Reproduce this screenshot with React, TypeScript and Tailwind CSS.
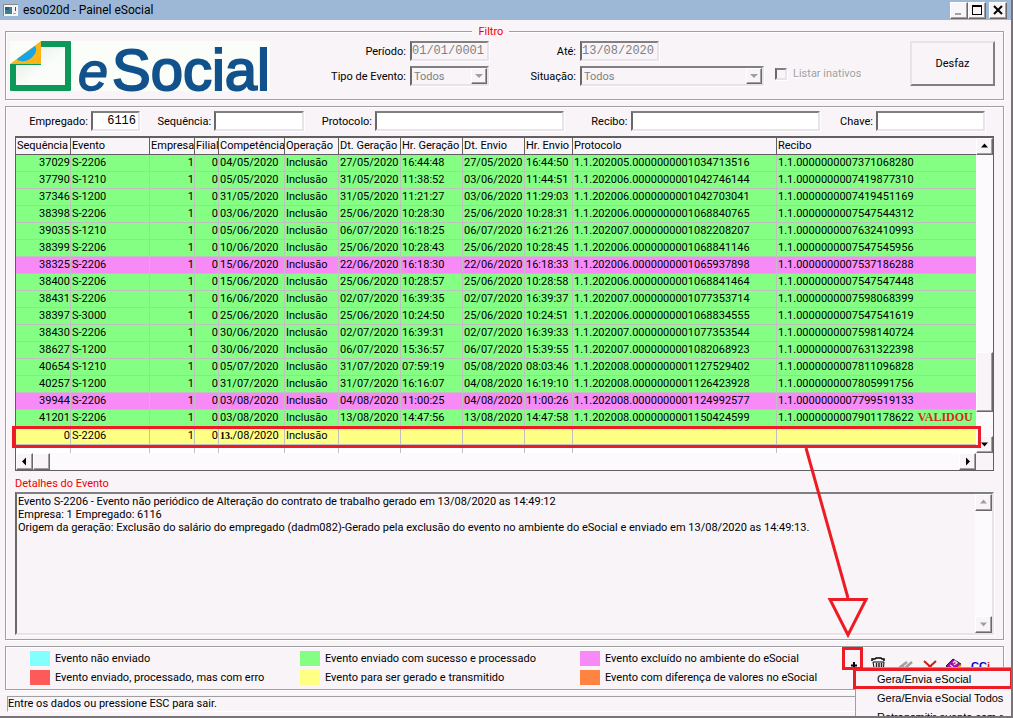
import { useState } from "react";
import type { ReactNode } from "react";

const etched = "border border-[#a0a0a0] shadow-[1px_1px_0_#fff,inset_1px_1px_0_#fff]";
const sunken =
  "border-2 border-t-[#808080] border-l-[#696969] border-r-[#e8e3e8] border-b-[#e8e3e8] shadow-[1px_1px_0_#fff]";
const raised =
  "border border-t-white border-l-white border-r-[#696969] border-b-[#696969] bg-[#f8f4f8] shadow-[inset_-1px_-1px_0_#a0a0a0]";
const track = "bg-[#fcfafc]";

type Tone = "sent" | "removed" | "pending";

interface EventRow {
  tone: Tone;
  cells: string[];
}

const toneClass: Record<Tone, string> = {
  sent: "bg-[#84ff84]",
  removed: "bg-[#f88af8]",
  pending: "bg-[#ffff84]",
};

const columns: { title: string; width: string; right?: boolean }[] = [
  { title: "Sequência", width: "w-[55px]", right: true },
  { title: "Evento", width: "w-[79px]" },
  { title: "Empresa", width: "w-[45px]", right: true },
  { title: "Filial", width: "w-[24px]", right: true },
  { title: "Competência", width: "w-[66px]" },
  { title: "Operação", width: "w-[54px]" },
  { title: "Dt. Geração", width: "w-[62px]" },
  { title: "Hr. Geração", width: "w-[62px]" },
  { title: "Dt. Envio", width: "w-[62px]" },
  { title: "Hr. Envio", width: "w-[48px]" },
  { title: "Protocolo", width: "w-[204px]" },
  { title: "Recibo", width: "" },
];

const row = (
  tone: Tone,
  seq: string,
  event: string,
  period: string,
  created: string,
  createdAt: string,
  sent: string,
  sentAt: string,
  protocol: string,
  receipt: string,
): EventRow => ({
  tone,
  cells: [seq, event, "1", "0", period, "Inclusão", created, createdAt, sent, sentAt, protocol, receipt],
});

const rows: EventRow[] = [
  row("sent", "37029", "S-2206", "04/05/2020", "27/05/2020", "16:44:48", "27/05/2020", "16:44:50", "1.1.202005.0000000001034713516", "1.1.0000000007371068280"),
  row("sent", "37790", "S-1210", "05/05/2020", "31/05/2020", "11:38:52", "03/06/2020", "11:44:51", "1.1.202006.0000000001042746144", "1.1.0000000007419877310"),
  row("sent", "37346", "S-1200", "31/05/2020", "31/05/2020", "11:21:27", "03/06/2020", "11:29:03", "1.1.202006.0000000001042703041", "1.1.0000000007419451169"),
  row("sent", "38398", "S-2206", "03/06/2020", "25/06/2020", "10:28:30", "25/06/2020", "10:28:31", "1.1.202006.0000000001068840765", "1.1.0000000007547544312"),
  row("sent", "39035", "S-1210", "05/06/2020", "06/07/2020", "16:18:25", "06/07/2020", "16:21:26", "1.1.202007.0000000001082208207", "1.1.0000000007632410993"),
  row("sent", "38399", "S-2206", "10/06/2020", "25/06/2020", "10:28:43", "25/06/2020", "10:28:45", "1.1.202006.0000000001068841146", "1.1.0000000007547545956"),
  row("removed", "38325", "S-2206", "15/06/2020", "22/06/2020", "16:18:30", "22/06/2020", "16:18:33", "1.1.202006.0000000001065937898", "1.1.0000000007537186288"),
  row("sent", "38400", "S-2206", "15/06/2020", "25/06/2020", "10:28:57", "25/06/2020", "10:28:58", "1.1.202006.0000000001068841464", "1.1.0000000007547547448"),
  row("sent", "38431", "S-2206", "16/06/2020", "02/07/2020", "16:39:35", "02/07/2020", "16:39:37", "1.1.202007.0000000001077353714", "1.1.0000000007598068399"),
  row("sent", "38397", "S-3000", "25/06/2020", "25/06/2020", "10:24:50", "25/06/2020", "10:24:51", "1.1.202006.0000000001068834555", "1.1.0000000007547541619"),
  row("sent", "38430", "S-2206", "30/06/2020", "02/07/2020", "16:39:31", "02/07/2020", "16:39:33", "1.1.202007.0000000001077353544", "1.1.0000000007598140724"),
  row("sent", "38627", "S-1200", "30/06/2020", "06/07/2020", "15:36:57", "06/07/2020", "15:39:55", "1.1.202007.0000000001082068923", "1.1.0000000007631322398"),
  row("sent", "40654", "S-1210", "05/07/2020", "31/07/2020", "07:59:19", "05/08/2020", "08:03:46", "1.1.202008.0000000001127529402", "1.1.0000000007811096828"),
  row("sent", "40257", "S-1200", "31/07/2020", "31/07/2020", "16:16:07", "04/08/2020", "16:19:10", "1.1.202008.0000000001126423928", "1.1.0000000007805991756"),
  row("removed", "39944", "S-2206", "03/08/2020", "04/08/2020", "11:00:25", "04/08/2020", "11:00:26", "1.1.202008.0000000001124992577", "1.1.0000000007799519133"),
  row("sent", "41201", "S-2206", "03/08/2020", "13/08/2020", "14:47:56", "13/08/2020", "14:47:58", "1.1.202008.0000000001150424599", "1.1.0000000007901178622"),
  row("pending", "0", "S-2206", "/08/2020", "", "", "", "", "", ""),
];

const legend = [
  { label: "Evento não enviado", color: "bg-[#84ffff]" },
  { label: "Evento enviado com sucesso e processado", color: "bg-[#84ff84]" },
  { label: "Evento excluído no ambiente do eSocial", color: "bg-[#f88af8]" },
  { label: "Evento enviado, processado, mas com erro", color: "bg-[#ff5a5a]" },
  { label: "Evento para ser gerado e transmitido", color: "bg-[#ffff84]" },
  { label: "Evento com diferença de valores no eSocial", color: "bg-[#ff8442]" },
];

const details = [
  "Evento S-2206 - Evento não periódico de Alteração do contrato de trabalho gerado em 13/08/2020 as 14:49:12",
  "Empresa: 1 Empregado: 6116",
  "Origem da geração: Exclusão do salário do empregado (dadm082)-Gerado pela exclusão do evento no ambiente do eSocial e enviado em 13/08/2020 as 14:49:13.",
].join("\n");

const arrowPoints = {
  up: "4,8 11,8 7.5,4",
  down: "4,5 11,5 7.5,9",
  left: "9,3 9,11 5,7",
  right: "6,3 6,11 10,7",
};

function ArrowButton({ dir, label, muted = false }: { dir: keyof typeof arrowPoints; label: string; muted?: boolean }) {
  return (
    <button
      type="button"
      aria-label={label}
      className={`flex h-[17px] w-[17px] shrink-0 items-center justify-center ${raised} ${muted ? "text-[#a0a0a0]" : "text-black"}`}
    >
      <svg width="15" height="15" viewBox="0 0 15 14" aria-hidden="true">
        <polygon points={arrowPoints[dir]} fill="currentColor" />
      </svg>
    </button>
  );
}

function TitleButton({ label, children }: { label: string; children: ReactNode }) {
  return (
    <button type="button" aria-label={label} className={`flex h-[17px] w-[18px] items-center justify-center ${raised}`}>
      <svg width="14" height="13" viewBox="0 0 14 13" fill="none" aria-hidden="true" shapeRendering="crispEdges">
        {children}
      </svg>
    </button>
  );
}

function Logo() {
  return (
    <svg
      width="262"
      height="50"
      viewBox="0 0 262 50"
      role="img"
      aria-label="eSocial"
      className="shrink-0 overflow-visible"
    >
      <defs>
        <linearGradient id="sheet" x1="0" y1="0" x2="1" y2="1">
          <stop offset="0" stopColor="#dfeadf" />
          <stop offset="0.6" stopColor="#fbfdfb" />
        </linearGradient>
      </defs>
      <rect x="1" width="260" height="50" fill="#fafdf8" />
      <path d="M32 0H61Q62 0 62 1V49Q62 50 61 50H2Q1 50 1 49V23H32Z" fill="#0b9858" />
      <path d="M32 6H56V44H7V24H32Z" fill="url(#sheet)" />
      <path d="M32 23V0L1 23Z" fill="#f9b515" />
      <path d="M8 18L26 5Q29 9 25 14Q20 21 12 20Q9 20 8 18Z" fill="#16a5e8" />
      <g fill="#12528c" stroke="#12528c" fontFamily="'Liberation Sans', Arial, sans-serif">
        <text x="69" y="49" fontSize="54" fontStyle="italic" strokeWidth="1.5">
          e
        </text>
        <text x="103" y="49" fontSize="58" strokeWidth="2">
          Social
        </text>
      </g>
    </svg>
  );
}

function SelectBox({ id, className }: { id: string; className: string }) {
  return (
    <div className={`flex h-5 bg-[#f8f4f8] ${sunken} ${className}`}>
      <select
        id={id}
        disabled
        className="min-w-0 flex-1 appearance-none bg-transparent pl-0.5 pt-px text-[11px] leading-4 text-[#808080] opacity-100"
      >
        <option>Todos</option>
      </select>
      <span className={`flex w-4 items-center justify-center text-[#a0a0a0] ${raised}`}>
        <svg width="8" height="4" viewBox="0 0 8 4" aria-hidden="true">
          <polygon points="0,0 8,0 4,4" fill="currentColor" />
        </svg>
      </span>
    </div>
  );
}

function FilterPanel() {
  const dateClass = `h-5 bg-[#f8f4f8] font-['Liberation_Mono',monospace] text-[12px] text-[#808080] ${sunken}`;
  return (
    <fieldset className={`mt-[5px] min-w-0 pb-2 pl-[3px] pr-2 pt-[3px] ${etched}`}>
      <legend className="ml-[47%] h-[13px] bg-[#f8f4f8] px-1.5 text-[11px] leading-[13px] text-[#f00000]">Filtro</legend>
      <div className="flex items-start">
        <Logo />
        <div className="ml-[55px] grid grid-cols-[80px_80px] items-center gap-x-1 gap-y-[5px]">
          <label htmlFor="periodo" className="text-right">Período:</label>
          <input id="periodo" disabled defaultValue="01/01/0001" className={`w-[79px] ${dateClass}`} />
          <label htmlFor="tipo" className="text-right">Tipo de Evento:</label>
          <SelectBox id="tipo" className="w-[79px]" />
        </div>
        <div className="ml-[26px] grid grid-cols-[60px_184px] items-center gap-x-1 gap-y-[5px]">
          <label htmlFor="ate" className="text-right">Até:</label>
          <input id="ate" disabled defaultValue="13/08/2020" className={`w-[79px] ${dateClass}`} />
          <label htmlFor="situacao" className="text-right">Situação:</label>
          <SelectBox id="situacao" className="w-full" />
        </div>
        <label className="ml-[11px] mt-[26px] flex items-center gap-1.5 text-[#a0a0a0] [text-shadow:1px_1px_0_#fff]">
          <input type="checkbox" disabled className={`size-3 appearance-none bg-[#f8f4f8] ${sunken}`} />
          Listar inativos
        </label>
        <button
          type="button"
          className="ml-auto h-[45px] w-[85px] border-2 border-b-[#808080] border-l-[#e8e3e8] border-r-[#808080] border-t-[#e8e3e8]"
        >
          Desfaz
        </button>
      </div>
    </fieldset>
  );
}

interface SearchFieldProps {
  id: string;
  label: string;
  className: string;
  inputClass: string;
  value?: string;
}

function SearchField({ id, label, className, inputClass, value = "" }: SearchFieldProps) {
  return (
    <div className={`flex items-center gap-[3px] ${className}`}>
      <label htmlFor={id} className="flex-1 whitespace-nowrap text-right">{label}</label>
      <input
        id={id}
        defaultValue={value}
        className={`h-5 bg-white pr-0.5 text-right font-['Liberation_Mono',monospace] text-[12px] ${sunken} ${inputClass}`}
      />
    </div>
  );
}

function CellContent({ rowIndex, column, value }: { rowIndex: number; column: number; value: string }) {
  if (rowIndex === 16 && column === 4) {
    return (
      <>
        <b className="font-['Liberation_Serif',serif] text-[10px] leading-none">13.</b>
        {value}
      </>
    );
  }
  if (rowIndex === 15 && column === 11) {
    return (
      <>
        {value}
        <b className="ml-1 font-['Liberation_Serif',serif] text-[12px] leading-none text-[#d8281c]">VALIDOU</b>
      </>
    );
  }
  return <>{value}</>;
}

function EventTable() {
  return (
    <div className="mt-[5px] border-b border-l border-r border-t-2 border-[#606060] bg-white">
      <div className="flex">
        <div className="min-w-0 flex-1">
          <table className="w-full table-fixed border-separate border-spacing-0 whitespace-nowrap leading-4">
            <colgroup>
              {columns.map((c) => (
                <col key={c.title} className={c.width} />
              ))}
            </colgroup>
            <thead>
              <tr>
                {columns.map((c) => (
                  <th
                    key={c.title}
                    className="h-[17px] overflow-hidden border-b border-r border-[#606060] bg-[#f8f4f8] p-0 pl-px text-left font-normal last:border-r-0"
                  >
                    {c.title}
                  </th>
                ))}
              </tr>
            </thead>
            <tbody>
              {rows.map((r, i) => (
                <tr key={i} className={toneClass[r.tone]}>
                  {r.cells.map((value, j) => (
                    <td
                      key={j}
                      className={`overflow-hidden border-b border-r border-[#c0c0c0] p-0 last:border-r-0 ${
                        i === 16 ? "h-[18px]" : "h-[17px]"
                      } ${columns[j].right ? "text-right" : "pl-px"}`}
                    >
                      <CellContent rowIndex={i} column={j} value={value} />
                    </td>
                  ))}
                </tr>
              ))}
              <tr aria-hidden="true">
                {columns.map((c) => (
                  <td key={c.title} className="h-2 border-r border-[#c0c0c0] p-0 last:border-r-0" />
                ))}
              </tr>
            </tbody>
          </table>
        </div>
        <div className={`flex w-[17px] shrink-0 flex-col ${track}`}>
          <ArrowButton dir="up" label="Rolar para cima" />
          <div className="flex flex-1 flex-col pb-6">
            <div className={`mt-auto h-[60px] ${raised}`} />
          </div>
          <ArrowButton dir="down" label="Rolar para baixo" />
        </div>
      </div>
      <div className={`flex h-[17px] ${track}`}>
        <ArrowButton dir="left" label="Rolar para a esquerda" />
        <div className={`h-[17px] w-[17px] ${raised}`} />
        <div className="flex-1" />
        <ArrowButton dir="right" label="Rolar para a direita" />
        <div className="w-[17px] bg-[#f8f4f8]" />
      </div>
    </div>
  );
}

function ToolButton({ label, onClick, children }: { label: string; onClick?: () => void; children: ReactNode }) {
  return (
    <button type="button" aria-label={label} onClick={onClick} className="h-4 shrink-0">
      <svg width="18" height="16" viewBox="0 0 18 16" fill="none" aria-hidden="true">
        {children}
      </svg>
    </button>
  );
}

function Toolbar({ onAdd }: { onAdd: () => void }) {
  return (
    <div className="flex items-start gap-[7px] pt-1.5">
      <ToolButton label="Gerar" onClick={onAdd}>
        <path d="M5 8.500H11M8 5V12" stroke="#000" strokeWidth="2" />
      </ToolButton>
      <ToolButton label="Excluir">
        <path d="M1 4V2H4L5 1H10L11 2H13V4" stroke="#000" strokeWidth="1.500" />
        <path d="M2 5H13L12 16H4Z" stroke="#000" strokeWidth="1" fill="#fff" />
        <path d="M5.500 6V15M8 6V15M10.500 6V15" stroke="#222" strokeWidth="1.500" />
      </ToolButton>
      <ToolButton label="Confirmar">
        <path d="M16 5L8 12L6 9M11 5L3 11" stroke="#a0a0a0" strokeWidth="2.500" />
      </ToolButton>
      <ToolButton label="Cancelar">
        <path d="M3 4L14 14M15 4L4 14" stroke="#d01818" strokeWidth="2" />
      </ToolButton>
      <ToolButton label="Manual">
        <path d="M0 9L7 2L15 7L8 15Z" fill="#a010a8" stroke="#301030" />
        <path d="M8 15L15 8" stroke="#e8a820" strokeWidth="2" />
        <path d="M4 8L7 10M7 6L9 4L11 6L8 8" stroke="#f8d0f0" strokeWidth="1.500" />
      </ToolButton>
      <button
        type="button"
        aria-label="CCi"
        className="h-4 pt-0.5 font-['Liberation_Sans',Arial,sans-serif] text-[11px] font-bold leading-3 text-[#0808c8]"
      >
        CC<span className="text-[#d01818]">i</span>
      </button>
    </div>
  );
}

function ContextMenu() {
  return (
    <ul
      role="menu"
      className="absolute left-[855px] right-0 top-[667px] h-[51px] overflow-hidden whitespace-nowrap border-l border-t border-[#a0a0a0] bg-[#f8f4f8] pt-0.5 font-['Liberation_Sans',Arial,sans-serif] text-[11px]"
    >
      {["Gera/Envia eSocial", "Gera/Envia eSocial Todos", "Retransmitir evento com r"].map((item) => (
        <li key={item} role="none" className="h-[19px]">
          <button type="button" role="menuitem" className="w-full pl-[21px] text-left leading-[19px]">
            {item}
          </button>
        </li>
      ))}
    </ul>
  );
}

function Annotations() {
  return (
    <svg
      className="pointer-events-none absolute left-0 top-0"
      width="1013"
      height="718"
      viewBox="0 0 1013 718"
      fill="none"
      stroke="#ed1c24"
      strokeWidth="3"
      aria-hidden="true"
    >
      <rect x="13.5" y="427.5" width="966" height="19" />
      <path d="M806 448L848 598" />
      <path d="M830 599.500H866L848 635Z" />
      <rect x="843.500" y="648.500" width="18" height="20" />
      <rect x="854.500" y="669.500" width="157" height="18" />
    </svg>
  );
}

export default function App() {
  const [menuOpen, setMenuOpen] = useState(true);
  return (
    <div className="relative flex h-screen flex-col overflow-hidden border-b-2 border-r-2 border-[#787478] bg-[#f8f4f8] font-[Roboto,'Liberation_Sans',sans-serif] text-[11px] leading-[13px] text-black">
      <header className="flex h-5 shrink-0 items-center bg-[#9db8d7] pl-[3px] pr-1">
        <svg width="15" height="12" viewBox="0 0 15 12" aria-hidden="true" shapeRendering="crispEdges">
          <rect width="15" height="12" fill="#f4f4f4" />
          <path d="M0 12V0H15" stroke="#8a8a8a" fill="none" />
          <rect x="2" y="3" width="7" height="7" fill="#3d7f86" />
          <rect x="2" y="3" width="4" height="3" fill="#2a5a9a" />
          <rect x="12" y="3" width="1" height="4" fill="#2a5a6a" />
          <rect x="10" y="9" width="3" height="1" fill="#aaa" />
        </svg>
        <h1 className="ml-[5px] text-[12px]">eso020d - Painel eSocial</h1>
        <div className="ml-auto flex">
          <TitleButton label="Minimizar">
            <path d="M3 10H9" stroke="#a0a0a0" strokeWidth="2" />
          </TitleButton>
          <TitleButton label="Maximizar">
            <path d="M2 2H12M2.500 2V11M11.500 2V11M2 10.500H12" stroke="#000" strokeWidth="1" />
            <path d="M2 2H12" stroke="#000" strokeWidth="2" />
          </TitleButton>
          <span className="w-[3px]" />
          <TitleButton label="Fechar">
            <path d="M3 2L11 10M11 2L3 10" stroke="#000" strokeWidth="2" shapeRendering="auto" />
          </TitleButton>
        </div>
      </header>

      <main className="flex min-h-0 flex-1 flex-col pl-[5px] pr-[7px]">
        <FilterPanel />

        <section className={`mt-1.5 flex min-h-0 flex-1 flex-col pb-1 pl-[9px] pr-[9px] pt-1 ${etched}`}>
          <div className="flex justify-between pl-[13px] pr-[9px]">
            <SearchField id="empregado" label="Empregado:" value="6116" className="w-[112px]" inputClass="w-[49px]" />
            <SearchField id="sequencia" label="Sequência:" className="w-[146px]" inputClass="w-[90px]" />
            <SearchField id="protocolo" label="Protocolo:" className="w-[243px]" inputClass="w-[189px]" />
            <SearchField id="recibo" label="Recibo:" className="w-[238px]" inputClass="w-[189px]" />
            <SearchField id="chave" label="Chave:" className="w-[148px]" inputClass="w-[109px]" />
          </div>
          <EventTable />
          <label htmlFor="detalhes" className="mt-1.5 pb-0.5 text-[#f00000]">
            Detalhes do Evento
          </label>
          <div className={`flex min-h-0 flex-1 ${sunken}`}>
            <textarea
              id="detalhes"
              readOnly
              value={details}
              className="block min-w-0 flex-1 resize-none overflow-hidden bg-transparent pl-px pt-px leading-[13px]"
            />
            <div className={`flex w-[17px] flex-col justify-between ${track}`}>
              <ArrowButton dir="up" label="Subir detalhes" muted />
              <ArrowButton dir="down" label="Descer detalhes" muted />
            </div>
          </div>
        </section>

        <section className={`mt-1.5 grid h-11 shrink-0 grid-cols-[816px_1fr] pl-6 pt-1 ${etched}`}>
          <ul className="grid grid-cols-[270px_280px_266px] content-start gap-y-1">
            {legend.map((item) => (
              <li key={item.label} className="flex items-center gap-[5px] leading-[15px]">
                <span className={`h-[15px] w-5 ${item.color}`} />
                {item.label}
              </li>
            ))}
          </ul>
          <Toolbar onAdd={() => setMenuOpen((open) => !open)} />
        </section>
      </main>

      <footer className="mt-[3px] shrink-0 border-t border-white pb-1 pl-[7px] pt-0.5">
        <p className="h-4 border-b border-l border-t border-b-white border-l-[#a0a0a0] border-t-[#a0a0a0] leading-[14px]">
          Entre os dados ou pressione ESC para sair.
        </p>
      </footer>

      {menuOpen && <ContextMenu />}
      <Annotations />
    </div>
  );
}
